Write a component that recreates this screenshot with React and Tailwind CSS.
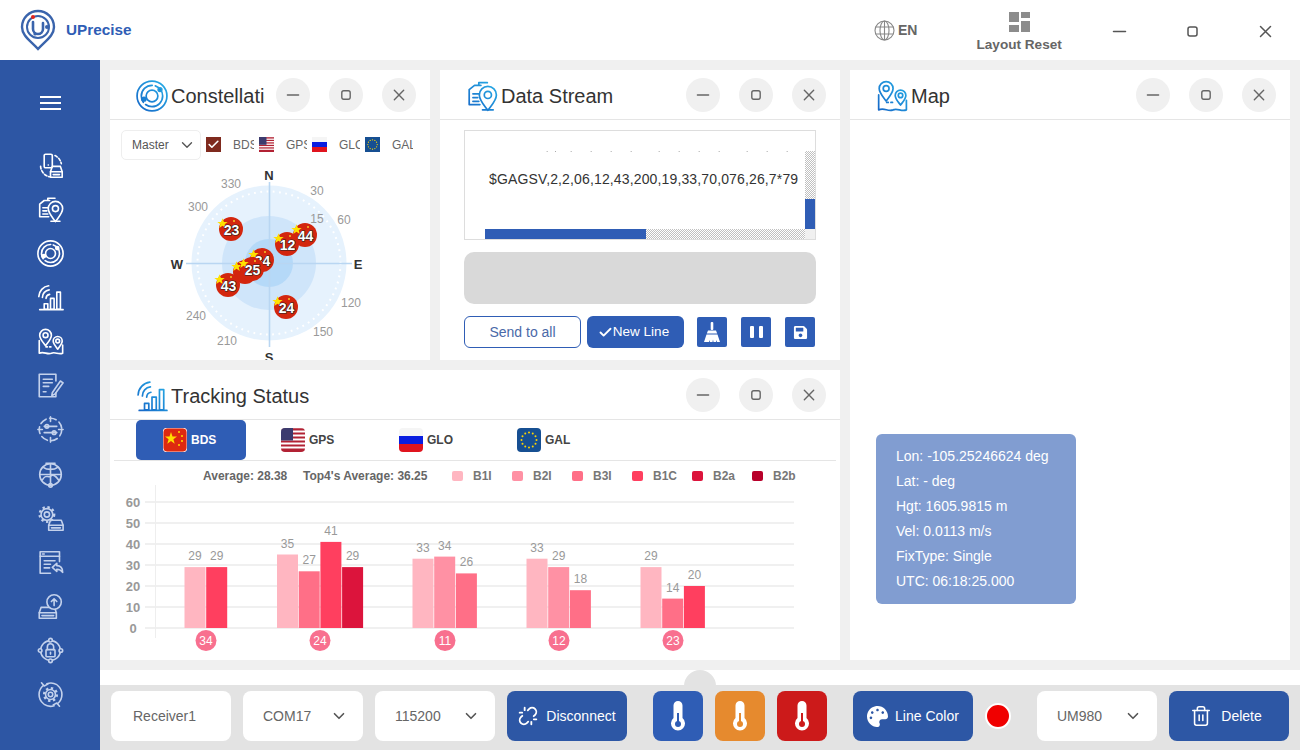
import React from "react";
import { ChevronDown, Trash2, Check, Unlink } from "lucide-react";
import { FaPalette, FaSave } from "react-icons/fa";

const Svg = ({ size = 26, color = "currentColor", sw = 1.7, grad = false, children }) => (
  <svg width={size} height={size} viewBox="0 0 30 30" fill="none" stroke={grad ? "url(#hdrgrad)" : color} strokeWidth={sw} strokeLinecap="round" strokeLinejoin="round" className="shrink-0">
    {grad && (
      <defs>
        <linearGradient id="hdrgrad" gradientUnits="userSpaceOnUse" x1="2" y1="28" x2="28" y2="2">
          <stop offset="0" stopColor="#1668c8" />
          <stop offset="1" stopColor="#27ade6" />
        </linearGradient>
      </defs>
    )}
    {children}
  </svg>
);

const Gear = ({ cx, cy, r }) => (
  <g>
    <circle cx={cx} cy={cy} r={r} />
    <circle cx={cx} cy={cy} r={r * 0.45} />
    <circle cx={cx} cy={cy} r={r + 1.6} strokeWidth={2.6} strokeDasharray="2.6 2.9" strokeLinecap="butt" />
  </g>
);

const Pin = ({ cx, cy, r }) => (
  <g>
    <path d={`M${cx} ${cy + r * 1.8} C${cx - r * 0.6} ${cy + r} ${cx - r} ${cy + r * 0.6} ${cx - r} ${cy} A${r} ${r} 0 0 1 ${cx + r} ${cy} C${cx + r} ${cy + r * 0.6} ${cx + r * 0.6} ${cy + r} ${cx} ${cy + r * 1.8}Z`} />
    <circle cx={cx} cy={cy} r={r * 0.42} />
  </g>
);

const Drive = ({ x, y, w = 14, h = 11 }) => (
  <g>
    <path d={`M${x} ${y + h * 0.5} L${x + 2} ${y} H${x + w - 2} L${x + w} ${y + h * 0.5} V${y + h} H${x}Z`} />
    <path d={`M${x} ${y + h * 0.5} H${x + w} M${x + 3} ${y + h * 0.76} H${x + w - 3}`} />
  </g>
);

const iconBodies = {
  device: (
    <g>
      <rect x="8" y="2.5" width="9" height="15" rx="1.5" />
      <path d="M12.5 14.5h.1" />
      <path d="M20 4 A12.5 12.5 0 0 1 27 13" strokeDasharray="3 2" />
      <path d="M4 16 A12.5 12.5 0 0 0 14 27.5" strokeDasharray="3 2" />
      <Drive x={15} y={16} w={13} h={12} />
    </g>
  ),
  docpin: (
    <g>
      <path d="M12 5 V2.5 H20 M3 9 L8 5 H14 M3 9 V23 H13" />
      <path d="M6.5 13h5.5 M6.5 16.5h4.5 M6.5 20h5.5" />
      <Pin cx={20.5} cy={14} r={8} />
      <path d="M15.5 28h10" />
    </g>
  ),
  orbit: (
    <g>
      <circle cx="15" cy="15" r="14" />
      <circle cx="15" cy="15" r="10" strokeDasharray="22 3" />
      <circle cx="15" cy="15" r="5.5" />
      <circle cx="7.5" cy="18" r="1.7" fill="currentColor" />
      <circle cx="22.5" cy="9" r="1.7" fill="currentColor" />
    </g>
  ),
  signal: (
    <g>
      <path d="M2 14 A12.5 12.5 0 0 1 13 2" />
      <path d="M6 15 A8.5 8.5 0 0 1 13.5 6.5" />
      <path d="M10 16 A5 5 0 0 1 14 11.5" />
      <rect x="8" y="22" width="4" height="6" />
      <rect x="15" y="16" width="4" height="12" />
      <rect x="22" y="9" width="4" height="19" />
      <path d="M3 28.5 H29" />
    </g>
  ),
  map: (
    <g>
      <Pin cx={9.5} cy={8} r={6.5} />
      <Pin cx={23} cy={14.5} r={5} />
      <path d="M2.5 14 V28 C8 25.5 11 30 16 28 C20 26 24 30 28.5 28 V19" />
      <path d="M10 21 h8" strokeDasharray="1.5 2.5" />
    </g>
  ),
  docedit: (
    <g>
      <path d="M21 10 V2.5 H2.5 V27.5 H21 V23" />
      <path d="M7 8h10 M7 12h10 M7 16h6 M7 22h3" />
      <path d="M17 23 L26 10 L29 12 L20 24.5 L16.5 26Z" />
    </g>
  ),
  sliders: (
    <g>
      <circle cx="15" cy="15" r="12.5" strokeDasharray="7.5 4" />
      <path d="M15 1v5 M15 24v5 M1 15h5 M24 15h5" />
      <path d="M8 11.5h14 M8 18.5h14" />
      <circle cx="11" cy="11.5" r="2" />
      <circle cx="19" cy="18.5" r="2" />
    </g>
  ),
  globe: (
    <g>
      <circle cx="15" cy="15" r="12" />
      <path d="M3.5 15h23 M15 3.5v23 M7 7c4 3 12 3 16 0" />
      <path d="M6 21 C10 14 12 19 15 17 C18 14 21 17 24 21" />
      <circle cx="15" cy="27" r="2" />
      <path d="M10 2.5h10" />
    </g>
  ),
  geardrive: (
    <g>
      <Gear cx={11} cy={10.5} r={6.5} />
      <Drive x={13} y={17} w={16} h={11} />
    </g>
  ),
  reply: (
    <g>
      <path d="M25 14 V3 H3.5 V27 H15" />
      <path d="M3.5 8h21.5 M8 13h12 M8 17h7 M8 21h6" />
      <path d="M6 5.5h2" />
      <path d="M17 20.5 L22 16 V18.5 C26 18.5 28.5 21 28.5 26 C27 23.5 25 22.5 22 22.5 V25Z" />
    </g>
  ),
  upload: (
    <g>
      <Drive x={2.5} y={16} w={19} h={12} />
      <circle cx="19" cy="10" r="8" fill="#2d56a4" />
      <path d="M19 14 V7 M16 9.5 L19 6.5 L22 9.5" />
    </g>
  ),
  lock: (
    <g>
      <circle cx="15" cy="15" r="11" />
      <circle cx="15" cy="3.5" r="2" fill="#2d56a4" />
      <circle cx="15" cy="26.5" r="2" fill="#2d56a4" />
      <circle cx="3.5" cy="15" r="2" fill="#2d56a4" />
      <circle cx="26.5" cy="15" r="2" fill="#2d56a4" />
      <rect x="10" y="14" width="10" height="8" rx="1" />
      <path d="M11.5 14 V11 A3.5 3.5 0 0 1 18.5 11 V14 M15 17v2" />
    </g>
  ),
  gearsync: (
    <g>
      <path d="M7 5 A13 13 0 0 0 7 25" />
      <path d="M23 25 A13 13 0 0 0 23 5" />
      <path d="M5 2 L8 5.5 L12 3.5 M25 28 L22 24.5 L18 26.5" />
      <path d="M8 26 A13 13 0 0 0 19 27.5 M11 3 A13 13 0 0 1 22 4" />
      <Gear cx={15} cy={15} r={5.5} />
    </g>
  ),
};

const Icon = ({ name, size = 26, color, sw, grad }) => (
  <Svg size={size} color={color} sw={sw} grad={grad}>
    {iconBodies[name]}
  </Svg>
);

const China = ({ s = 15, rx = 0 }) => (
  <svg width={s} height={s} viewBox="0 0 24 24" className="shrink-0">
    <rect width="24" height="24" rx={rx} fill="#de2910" stroke="#fff" strokeWidth={rx ? 0.8 : 0} />
    <polygon points="8,4 9.5,8.5 14,8.5 10.4,11.2 11.7,15.7 8,13 4.3,15.7 5.6,11.2 2,8.5 6.5,8.5" fill="#ffde00" />
    <circle cx="16" cy="4" r="1" fill="#ffde00" />
    <circle cx="19" cy="8" r="1" fill="#ffde00" />
    <circle cx="19" cy="13" r="1" fill="#ffde00" />
    <circle cx="16" cy="17" r="1" fill="#ffde00" />
  </svg>
);

const USA = ({ s = 15, rx = 0 }) => (
  <svg width={s} height={s} viewBox="0 0 24 24" className="shrink-0">
    <defs>
      <clipPath id={`usa${s}`}><rect width="24" height="24" rx={rx} /></clipPath>
    </defs>
    <g clipPath={`url(#usa${s})`}>
      <rect width="24" height="24" fill="#fff" />
      {[0, 2, 4, 6, 8, 10].map((i) => (
        <rect key={i} y={i * 2 + 0.5} width="24" height="2" fill="#b22234" />
      ))}
      <rect y="22" width="24" height="2" fill="#b22234" />
      <rect width="12" height="12.5" fill="#3c3b6e" />
      <rect x="12" width="12" height="0.5" fill="#b22234" />
    </g>
  </svg>
);

const Russia = ({ s = 15, rx = 0 }) => (
  <svg width={s} height={s} viewBox="0 0 24 24" className="shrink-0">
    <defs>
      <clipPath id={`ru${s}`}><rect width="24" height="24" rx={rx} /></clipPath>
    </defs>
    <g clipPath={`url(#ru${s})`}>
      <rect width="24" height="8" fill="#f5f5f5" />
      <rect y="8" width="24" height="8" fill="#0a1ee0" />
      <rect y="16" width="24" height="8" fill="#e0141e" />
    </g>
  </svg>
);

const EU = ({ s = 15, rx = 0 }) => (
  <svg width={s} height={s} viewBox="0 0 24 24" className="shrink-0">
    <rect width="24" height="24" rx={rx} fill="#164f92" />
    {Array.from({ length: 12 }).map((_, i) => {
      const a = (i * Math.PI) / 6;
      return <circle key={i} cx={12 + 7.5 * Math.cos(a)} cy={12 + 7.5 * Math.sin(a)} r="1" fill="#ffd500" />;
    })}
  </svg>
);

const WinBtn = ({ kind, size = 15, color = "#666" }) => (
  <svg width={size} height={size} viewBox="0 0 15 15" fill="none" stroke={color} strokeWidth="1.5" strokeLinecap="round">
    {kind === "min" && <path d="M1.5 7.5h12" />}
    {kind === "max" && <rect x="3" y="3" width="9" height="9" rx="2" />}
    {kind === "close" && <path d="M2.5 2.5l10 10M12.5 2.5l-10 10" />}
  </svg>
);

const Circle = ({ kind }) => (
  <div className="flex h-[34px] w-[34px] shrink-0 items-center justify-center rounded-full bg-[#f0f0f0]">
    <WinBtn kind={kind} size={14} />
  </div>
);

const PanelHeader = ({ icon, title }) => (
  <div className="flex h-[50px] shrink-0 items-center border-b border-[#e5e5e5] pl-[26px] pr-[14px]">
    <div className="pt-[2px] text-[#1a87d6]">
      <Icon name={icon} size={32} grad sw={1.6} />
    </div>
    <div className="ml-[3px] mr-[11px] min-w-0 flex-1 overflow-hidden whitespace-nowrap pt-[3px] text-[20px] leading-[26px] text-[#333]">{title}</div>
    <div className="flex gap-[19px]">
      <Circle kind="min" />
      <Circle kind="max" />
      <Circle kind="close" />
    </div>
  </div>
);

const ConstFilter = ({ flag, label }) => (
  <div className="flex w-[53px] shrink-0 items-center">
    {flag}
    <span className="ml-3 w-[21px] overflow-hidden whitespace-nowrap text-xs text-[#666]">{label}</span>
  </div>
);

const sats = [
  [231, 229, "23"],
  [305, 235, "44"],
  [287, 244, "12"],
  [262, 260, "34"],
  [245, 272, ""],
  [252, 269, "25"],
  [228, 285, "43"],
  [286, 307, "24"],
];

const degrees = [
  [231, 188, "330"],
  [317, 195, "30"],
  [198, 211, "300"],
  [317, 223, "15"],
  [344, 224, "60"],
  [351, 307, "120"],
  [196, 320, "240"],
  [323, 336, "150"],
  [227, 345, "210"],
];

const Radar = () => (
  <svg width="320" height="200" viewBox="110 160 320 200" className="block">
    <circle cx="269" cy="263" r="77.5" fill="#e6f2fd" />
    <circle cx="269" cy="263" r="71.5" fill="none" stroke="#fff" strokeWidth="2" strokeDasharray="1.8 4.5" />
    <circle cx="269" cy="263" r="47" fill="#cfe5fa" />
    <circle cx="269" cy="263" r="24" fill="#b5d9f8" />
    <path d="M186 263.5H352 M269.5 182V347" stroke="#b9d6f2" strokeWidth="1.6" />
    {degrees.map(([x, y, t]) => (
      <text key={t} x={x} y={y} textAnchor="middle" fontSize="12" fill="#999">{t}</text>
    ))}
    {[[269, 180, "N"], [358, 269, "E"], [177, 269, "W"], [269, 362, "S"]].map(([x, y, t]) => (
      <text key={t} x={x} y={y} textAnchor="middle" fontSize="13" fontWeight="700" fill="#333">{t}</text>
    ))}
    {sats.map(([x, y, t], i) => (
      <g key={i}>
        <circle cx={x} cy={y} r="12" fill="#d3260e" />
        <circle cx={x + 3} cy={y - 8} r="1" fill="#f7c52b" />
        <polygon transform={`translate(${x - 8.5} ${y - 5.5}) scale(0.65)`} points="0,-8 2.2,-2.5 8,-2.5 3.4,1 5,7 0,3.6 -5,7 -3.4,1 -8,-2.5 -2.2,-2.5" fill="#ffe100" />
        {t && (
          <text x={x + 0.5} y={y + 5.5} textAnchor="middle" fontSize="14" fontWeight="700" fill="#fff" stroke="#222" strokeWidth="1.2" paintOrder="stroke">{t}</text>
        )}
      </g>
    ))}
  </svg>
);

const Constellation = () => (
  <div className="flex h-[290px] w-[320px] shrink-0 flex-col overflow-hidden bg-white">
    <PanelHeader icon="orbit" title="Constellation" />
    <div className="flex h-[40px] shrink-0 items-center pl-[11px] pt-[9px]">
      <div className="flex h-[30px] w-[80px] shrink-0 items-center justify-between rounded-[5px] border border-[#eeeeee] pl-[10px] pr-[4px] text-xs text-[#555]">
        Master
        <ChevronDown size={18} strokeWidth={1.8} color="#555" />
      </div>
      <div className="ml-[5px] flex">
        <ConstFilter
          label="BDS"
          flag={
            <div className="flex h-[15px] w-[15px] shrink-0 items-center justify-center bg-[#7f2a1e]">
              <Check size={13} strokeWidth={3} color="#fff" />
            </div>
          }
        />
        <ConstFilter label="GPS" flag={<USA />} />
        <ConstFilter label="GLO" flag={<Russia />} />
        <ConstFilter label="GAL" flag={<EU />} />
      </div>
    </div>
    <Radar />
  </div>
);

const streamDots = [320, 345, 392, 452, 512, 572, 656, 716, 776, 836, 920, 980, 1040];

const SquareBtn = ({ children }) => (
  <div className="flex h-[30px] w-[30px] items-center justify-center rounded-[2px] bg-[#2f5db5] text-white">{children}</div>
);

const DataStream = () => (
  <div className="flex h-[290px] flex-1 flex-col overflow-hidden bg-white">
    <PanelHeader icon="docpin" title="Data Stream" />
    <div className="flex flex-1 flex-col px-6 pt-[10px]">
      <div className="relative h-[110px] border border-[#dddddd]">
        <svg width="350" height="4" className="absolute left-0 top-[19px]">
          {streamDots.map((d) => (
            <rect key={d} x={d / 3 - 25} y="1" width="1" height="1" fill="#aaa" />
          ))}
        </svg>
        <div className="whitespace-nowrap pl-6 pt-[39px] text-sm leading-[18px] tracking-[0.14px] text-[#333]">$GAGSV,2,2,06,12,43,200,19,33,70,076,26,7*79</div>
        <div className="absolute bottom-0 left-5 right-[10px] h-[10px] bg-[repeating-conic-gradient(#c0c0c0_0_25%,#ffffff_0_50%)] bg-[length:2px_2px]">
          <div className="h-full w-[161px] bg-[#2f5db5]" />
        </div>
        <div className="absolute bottom-[10px] right-0 top-5 flex w-[10px] flex-col justify-end bg-[repeating-conic-gradient(#c0c0c0_0_25%,#ffffff_0_50%)] bg-[length:2px_2px]">
          <div className="h-[30px] w-full bg-[#2f5db5]" />
        </div>
        <div className="absolute bottom-0 right-0 h-[10px] w-[10px] bg-[#f0f0f0]" />
      </div>
      <div className="mt-3 h-[52px] rounded-[10px] bg-[#d9d9d9]" />
      <div className="mt-3 flex items-center">
        <div className="flex h-[32px] w-[117px] items-center justify-center rounded-[6px] border border-[#2f5db5] text-sm text-[#4a69a8]">Send to all</div>
        <div className="ml-[6px] flex h-[32px] w-[97px] items-center justify-center rounded-[6px] bg-[#2f5db5] pr-[4px] text-[13.5px] text-white">
          <Check size={15} strokeWidth={3} color="#fff" />
          New Line
        </div>
        <div className="ml-[13px] flex gap-[14px]">
          <SquareBtn>
            <svg width="20" height="22" viewBox="0 0 20 22" fill="#fff">
              <rect x="8.7" y="1" width="2.6" height="8" rx="1" />
              <path d="M6 9.5h8l1.2 3H4.8z" />
              <path d="M4.5 13.5h11L18 21h-3l-.6-2-.4 2h-2.5l-.5-2.5-.5 2.5H8l-.4-2-.6 2H2z" />
            </svg>
          </SquareBtn>
          <SquareBtn>
            <div className="flex gap-[5px]">
              <div className="h-[12px] w-[4px] rounded-[1px] bg-white" />
              <div className="h-[12px] w-[4px] rounded-[1px] bg-white" />
            </div>
          </SquareBtn>
          <SquareBtn>
            <FaSave size={15} />
          </SquareBtn>
        </div>
      </div>
    </div>
  </div>
);

const tabs = [
  { label: "BDS", flag: <China s={24} rx={4} />, active: true },
  { label: "GPS", flag: <USA s={24} rx={4} /> },
  { label: "GLO", flag: <Russia s={24} rx={4} /> },
  { label: "GAL", flag: <EU s={24} rx={4} /> },
];

const legend = [
  ["B1I", "bg-[#ffb6c1]"],
  ["B2I", "bg-[#ff91a4]"],
  ["B3I", "bg-[#ff6f87]"],
  ["B1C", "bg-[#ff3f5f]"],
  ["B2a", "bg-[#dc143c]"],
  ["B2b", "bg-[#b8002a]"],
];

const C = { a: "#ffb6c1", b: "#ff91a4", c: "#ff6f87", d: "#ff3f5f", e: "#dc143c" };
const groups = [
  { id: "34", cx: 206, x: 184.5, bars: [[29, C.a], [29, C.d]] },
  { id: "24", cx: 320, x: 277, bars: [[35, C.a], [27, C.c], [41, C.d], [29, C.e]] },
  { id: "11", cx: 445, x: 412.5, bars: [[33, C.a], [34, C.b], [26, C.c]] },
  { id: "12", cx: 559, x: 526.5, bars: [[33, C.a], [29, C.b], [18, C.c]] },
  { id: "23", cx: 673, x: 640.5, bars: [[29, C.a], [14, C.c], [20, C.d]] },
];

const BarChart = () => (
  <svg width="730" height="175" viewBox="110 485 730 175" className="block">
    {[0, 10, 20, 30, 40, 50, 60].map((v) => {
      const y = 628 - v * 2.1;
      return (
        <g key={v}>
          <path d={`M145 ${y}H794`} stroke="#f0f0f0" strokeWidth="2" />
          <text x="133" y={y + 5} textAnchor="middle" fontSize="13" fontWeight="700" fill="#999">{v}</text>
        </g>
      );
    })}
    <path d="M155.5 485V638" stroke="#eeeeee" strokeWidth="1" />
    {groups.map((g) => (
      <g key={g.id}>
        {g.bars.map(([v, col], i) => {
          const h = v * 2.1;
          const x = g.x + i * 21.7;
          return (
            <g key={i}>
              <rect x={x} y={628 - h} width="21" height={h} fill={col} />
              <text x={x + 10.5} y={628 - h - 7} textAnchor="middle" fontSize="12" fill="#999">{v}</text>
            </g>
          );
        })}
        <circle cx={g.cx} cy="640.5" r="10.5" fill="#f8708f" />
        <text x={g.cx} y="645" textAnchor="middle" fontSize="12" fill="#fff">{g.id}</text>
      </g>
    ))}
  </svg>
);

const Tracking = () => (
  <div className="flex h-[290px] flex-col overflow-hidden bg-white">
    <PanelHeader icon="signal" title="Tracking Status" />
    <div className="mx-1 flex h-[41px] shrink-0 gap-2 border-b border-[#e5e5e5] pl-[22px]">
      {tabs.map((t) => (
        <div key={t.label} className={`flex h-[40px] w-[110px] items-center gap-1 rounded-[5px] pl-[27px] text-xs font-bold ${t.active ? "bg-[#2f5db5] text-white" : "text-[#444]"}`}>
          {t.flag}
          {t.label}
        </div>
      ))}
    </div>
    <div className="flex h-[24px] shrink-0 items-center pl-[93px] pt-[5px] text-xs">
      <span className="w-[100px] font-bold text-[#666]">Average: 28.38</span>
      <span className="w-[149px] font-bold text-[#666]">Top4's Average: 36.25</span>
      {legend.map(([l, c]) => (
        <div key={l} className="flex w-[60px] shrink-0 items-center">
          <div className={`h-[10px] w-[11px] rounded-[2px] ${c}`} />
          <span className="ml-[10px] font-bold text-[#777]">{l}</span>
        </div>
      ))}
    </div>
    <BarChart />
  </div>
);

const MapPanel = () => (
  <div className="flex h-[590px] flex-1 flex-col bg-white">
    <PanelHeader icon="map" title="Map" />
    <div className="flex flex-1 items-end px-[26px] pb-[56px]">
      <div className="h-[170px] w-[200px] rounded-[6px] bg-[#819dd1] px-5 py-[10px] text-sm leading-[25px] text-white">
        <div>Lon: -105.25246624 deg</div>
        <div>Lat: - deg</div>
        <div>Hgt: 1605.9815 m</div>
        <div>Vel: 0.0113 m/s</div>
        <div>FixType: Single</div>
        <div>UTC: 06:18:25.000</div>
      </div>
    </div>
  </div>
);

const Thermo = ({ bg, ink }) => (
  <div className={`flex h-[50px] w-[50px] items-center justify-center rounded-[8px] ${bg}`}>
    <svg width="16" height="30" viewBox="0 0 16 30">
      <path d="M3.5 4.5a4.5 4.5 0 0 1 9 0v12.6a7 7 0 1 1-9 0z" fill="#fff" />
      <rect x="7" y="12" width="2" height="10" fill={ink} />
      <circle cx="8" cy="23" r="3" fill={ink} />
    </svg>
  </div>
);

const WhiteBox = ({ children, chevron }) => (
  <div className={`flex h-[50px] w-[120px] items-center justify-between rounded-[8px] bg-white pr-[15px] text-sm text-[#666] ${chevron ? "pl-[20px]" : "pl-[22px]"}`}>
    {children}
    {chevron && <ChevronDown size={18} strokeWidth={2.2} color="#555" />}
  </div>
);

const DarkBtn = ({ icon, children, gap = "gap-2", extra = "" }) => (
  <div className={`flex h-[50px] w-[120px] items-center justify-center rounded-[8px] bg-[#2d57a5] text-sm text-white ${gap} ${extra}`}>
    {icon}
    {children}
  </div>
);

const BottomBar = () => (
  <div className="relative flex h-[80px] shrink-0 flex-col bg-white pt-[15px]">
    <div className="absolute left-[584px] top-0 h-[32px] w-[32px] rounded-full bg-[#e3e3e3]" />
    <div className="relative flex h-[65px] items-start bg-[#e3e3e3] pl-[11px] pt-[6px]">
      <WhiteBox>Receiver1</WhiteBox>
      <div className="ml-3"><WhiteBox chevron>COM17</WhiteBox></div>
      <div className="ml-3"><WhiteBox chevron>115200</WhiteBox></div>
      <div className="ml-3"><DarkBtn icon={<Unlink size={20} strokeWidth={2.2} />}>Disconnect</DarkBtn></div>
      <div className="ml-[26px] flex gap-3">
        <Thermo bg="bg-[#2f5db5]" ink="#2f5db5" />
        <Thermo bg="bg-[#e68a2e]" ink="#e68a2e" />
        <Thermo bg="bg-[#cc1a1a]" ink="#cc1a1a" />
      </div>
      <div className="ml-[26px]"><DarkBtn icon={<FaPalette size={21} />} gap="gap-[7px]">Line Color</DarkBtn></div>
      <div className="ml-3 mt-[12px] h-[26px] w-[26px] rounded-full border-2 border-white bg-[#f00000]" />
      <div className="ml-[26px]"><WhiteBox chevron>UM980</WhiteBox></div>
      <div className="ml-3"><DarkBtn icon={<Trash2 size={22} strokeWidth={1.7} />} gap="gap-[9px]" extra="pr-[6px]">Delete</DarkBtn></div>
    </div>
  </div>
);

const Logo = () => (
  <svg width="36" height="42" viewBox="0 0 36 42" fill="none" className="shrink-0">
    <path d="M18 40 C11 32 2 27 2 18 A16 16 0 0 1 34 18 C34 27 25 32 18 40Z" stroke="#3a64ac" strokeWidth="2.4" />
    <circle cx="18" cy="18" r="11" stroke="#3a64ac" strokeWidth="2" />
    <path d="M13 13 V20 A5 5 0 0 0 23 20 V14" stroke="#3a64ac" strokeWidth="2.6" strokeLinecap="round" />
    <circle cx="13" cy="8" r="2" fill="#e2231a" />
    <circle cx="27" cy="18" r="2" fill="#3a64ac" />
    <circle cx="15" cy="25" r="1.6" fill="#3a64ac" />
  </svg>
);

const TopBar = () => (
  <div className="flex h-[60px] shrink-0 items-center bg-white pl-[20px]">
    <Logo />
    <div className="ml-[10px] w-[65px] whitespace-nowrap text-[15.3px] font-bold text-[#2f5db5]">UPrecise</div>
    <div className="ml-[743px] flex items-center text-[#666]">
      <svg width="21" height="21" viewBox="0 0 21 21" fill="none" stroke="#888" strokeWidth="1.1">
        <circle cx="10.5" cy="10.5" r="9.5" />
        <ellipse cx="10.5" cy="10.5" rx="4.5" ry="9.5" />
        <path d="M10.5 1v19M1.5 7h18M1.5 14h18" />
      </svg>
      <span className="ml-[3px] text-[14px] font-bold">EN</span>
    </div>
    <div className="ml-[59px] flex flex-col items-center pt-[3px] text-[13.6px] font-bold leading-[15px] text-[#666]">
      <div className="flex gap-[2px]">
        <div className="flex flex-col gap-[3px]">
          <div className="h-[10px] w-[10px] bg-[#8c8c8c]" />
          <div className="h-[7px] w-[10px] bg-[#8c8c8c]" />
        </div>
        <div className="flex flex-col gap-[3px]">
          <div className="h-[6px] w-[9px] bg-[#8c8c8c]" />
          <div className="h-[11px] w-[9px] bg-[#8c8c8c]" />
        </div>
      </div>
      <span className="mt-[5px] whitespace-nowrap">Layout Reset</span>
    </div>
    <div className="ml-[50px] flex items-center gap-[58px] pt-[2px]">
      <WinBtn kind="min" color="#555" size={15} />
      <WinBtn kind="max" color="#555" size={15} />
      <WinBtn kind="close" color="#555" size={15} />
    </div>
  </div>
);

const sideIcons = ["device", "docpin", "orbit", "signal", "map", "docedit", "sliders", "globe", "geardrive", "reply", "upload", "lock", "gearsync"];

const Sidebar = () => (
  <div className="flex w-[100px] shrink-0 flex-col items-center bg-[#2d56a4]">
    <div className="mt-[36px] flex w-[21px] flex-col gap-[4px]">
      <div className="h-[2px] bg-white" />
      <div className="h-[2px] bg-white" />
      <div className="h-[2px] bg-white" />
    </div>
    <div className="mt-[41.5px] flex flex-col items-center gap-[17.17px]">
      {sideIcons.map((n, i) => (
        <div key={n} className={i < 5 ? "text-white" : "text-[#c3d1ec]"}>
          <Icon name={n} size={27} sw={1.8} />
        </div>
      ))}
    </div>
  </div>
);

export default function App() {
  return (
    <div className="flex h-[750px] w-[1300px] flex-col overflow-hidden bg-[#f0f0f0] [font-family:'Liberation_Sans',Arial,sans-serif]">
      <TopBar />
      <div className="flex min-h-0 flex-1">
        <Sidebar />
        <div className="flex min-w-0 flex-1 flex-col">
          <div className="flex flex-1 gap-[10px] p-[10px]">
            <div className="flex w-[730px] shrink-0 flex-col gap-[10px]">
              <div className="flex gap-[10px]">
                <Constellation />
                <DataStream />
              </div>
              <Tracking />
            </div>
            <MapPanel />
          </div>
          <BottomBar />
        </div>
      </div>
    </div>
  );
}
